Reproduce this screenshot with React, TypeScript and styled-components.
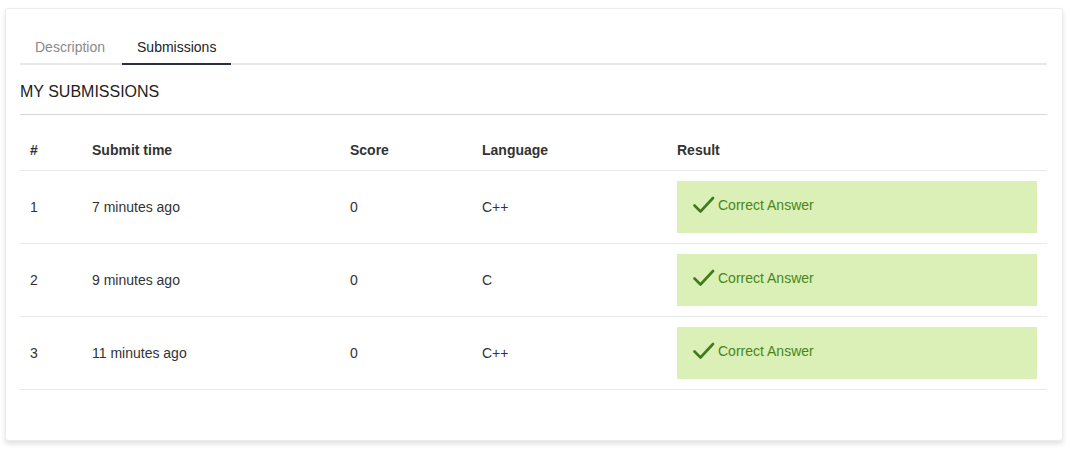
import React from 'react'
import styled, { createGlobalStyle } from 'styled-components'

const font = '"Liberation Sans", Arial, Helvetica, sans-serif'

const GlobalStyle = createGlobalStyle`
  html, body {
    margin: 0;
    padding: 0;
    background: #ffffff;
  }
  body, table, th, td {
    font-family: ${font};
    color: #333;
  }
`

interface Submission {
  id: number
  time: string
  score: number
  language: string
}

const submissions: Submission[] = [
  { id: 1, time: '7 minutes ago', score: 0, language: 'C++' },
  { id: 2, time: '9 minutes ago', score: 0, language: 'C' },
  { id: 3, time: '11 minutes ago', score: 0, language: 'C++' },
]

const Page = styled.div`
  padding: 8px 13px 16px 5px;
`

const Card = styled.div`
  background: #fff;
  border: 1px solid #ececec;
  border-radius: 3px;
  box-shadow: 0 3px 5px rgba(0, 0, 0, 0.12);
  padding: 28px 15px 50px 14px;
`

const Tabs = styled.div`
  display: flex;
  gap: 2px;
  border-bottom: 2px solid #e8e8e8;
`

const Tab = styled.div<{ active?: boolean }>`
  padding: 1px 15px 6px;
  font-family: ${font};
  font-size: 14px;
  line-height: 19px;
  color: ${props => (props.active ? '#222' : '#8a8a8a')};
  border-bottom: 2px solid ${props => (props.active ? '#27313d' : 'transparent')};
  margin-bottom: -2px;
`

const Title = styled.h2`
  margin: 0;
  padding: 17px 0 12px;
  font-family: ${font};
  font-size: 16px;
  font-weight: normal;
  line-height: 20px;
  color: #222;
  border-bottom: 1px solid #d6d6d6;
`

const Table = styled.table`
  width: 100%;
  margin-top: 15px;
  border-collapse: collapse;
  table-layout: fixed;
  font-family: ${font};
  font-size: 14px;
`

const HeadCell = styled.th`
  text-align: left;
  font-weight: bold;
  font-size: 14px;
  color: #333;
  padding: 10px 10px;
  line-height: 20px;
  border-bottom: 1px solid #e8e8e8;
`

const Cell = styled.td`
  padding: 10px 10px 10px;
  font-size: 14px;
  line-height: 20px;
  color: #333;
  border-bottom: 1px solid #e8e8e8;
  height: 52px;
`

const ResultBox = styled.div`
  display: flex;
  align-items: center;
  gap: 3px;
  height: 52px;
  margin-top: -1px;
  padding: 0 16px 3px;
  box-sizing: border-box;
  background: #dbf0b6;
  color: #478619;
  font-family: ${font};
  font-size: 14px;
`

const Check = () => (
  <svg width="22" height="20" viewBox="0 0 22 20" fill="none">
    <path d="M1.5 10.5 L7.5 16.5 L20 3" stroke="#3f7c19" strokeWidth="2.6" strokeLinecap="round" strokeLinejoin="round" />
  </svg>
)

export default function App() {
  return (
    <>
      <GlobalStyle />
      <Page>
        <Card>
          <Tabs>
            <Tab>Description</Tab>
            <Tab active>Submissions</Tab>
          </Tabs>
          <Title>MY SUBMISSIONS</Title>
          <Table>
            <colgroup>
              <col style={{ width: 62 }} />
              <col style={{ width: 258 }} />
              <col style={{ width: 132 }} />
              <col style={{ width: 195 }} />
              <col />
            </colgroup>
            <thead>
              <tr>
                <HeadCell>#</HeadCell>
                <HeadCell>Submit time</HeadCell>
                <HeadCell>Score</HeadCell>
                <HeadCell>Language</HeadCell>
                <HeadCell>Result</HeadCell>
              </tr>
            </thead>
            <tbody>
              {submissions.map(s => (
                <tr key={s.id}>
                  <Cell>{s.id}</Cell>
                  <Cell>{s.time}</Cell>
                  <Cell>{s.score}</Cell>
                  <Cell>{s.language}</Cell>
                  <Cell>
                    <ResultBox>
                      <Check />
                      Correct Answer
                    </ResultBox>
                  </Cell>
                </tr>
              ))}
            </tbody>
          </Table>
        </Card>
      </Page>
    </>
  )
}
